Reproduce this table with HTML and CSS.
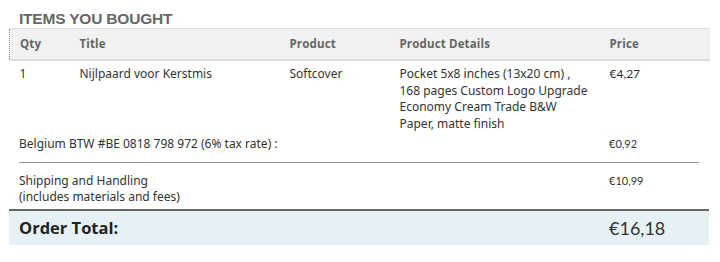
FILE: index.html
```html
<!DOCTYPE html>
<html>
<head>
<meta charset="utf-8">
<link rel="stylesheet" href="styles.css">
</head>
<body>
<div class="items">
  <h2 class="items-title">ITEMS YOU BOUGHT</h2>
  <table class="items-table">
    <colgroup>
      <col class="c-qty"><col class="c-title"><col class="c-product"><col class="c-details"><col class="c-price">
    </colgroup>
    <thead>
      <tr><th>Qty</th><th>Title</th><th>Product</th><th>Product Details</th><th>Price</th></tr>
    </thead>
    <tbody>
      <tr>
        <td>1</td>
        <td>Nijlpaard voor Kerstmis</td>
        <td>Softcover</td>
        <td>Pocket 5x8 inches (13x20 cm) ,<br>168 pages Custom Logo Upgrade<br>Economy Cream Trade B&amp;W<br>Paper, matte finish</td>
        <td class="price">€4,27</td>
      </tr>
    </tbody>
  </table>
  <div class="summary-row tax">
    <div class="label">Belgium BTW #BE 0818 798 972 (6% tax rate) :</div>
    <div class="amount">€0,92</div>
  </div>
  <div class="summary-row shipping">
    <div class="label">Shipping and Handling<br>(includes materials and fees)</div>
    <div class="amount">€10,99</div>
  </div>
  <div class="total-row">
    <div class="total-label">Order Total:</div>
    <div class="total-amount">€16,18</div>
  </div>
</div>
</body>
</html>
```
FILE: styles.css
```css
html, body {
  margin: 0;
  padding: 0;
  background: #fff;
}
body {
  font-family: "Noto Sans", "Open Sans", sans-serif;
  color: #333;
}
.items {
  width: 700px;
  margin-left: 9px;
}
.items-title {
  margin: 0;
  padding: 10px 0 0 10px;
  font-family: "Liberation Sans", Arial, sans-serif;
  font-weight: 700;
  font-size: 15.5px;
  line-height: 18px;
  letter-spacing: -0.2px;
  color: #666;
}
.items-table {
  width: 700px;
  border-collapse: collapse;
  table-layout: fixed;
}
.c-qty { width: 60px; }
.c-title { width: 210px; }
.c-product { width: 110px; }
.c-details { width: 210px; }
.c-price { width: 110px; }
.items-table th {
  background: #f1f1f1;
  border-top: 1px solid #ddd;
  border-bottom: 2px solid #ddd;
  border-left: 0;
  text-align: left;
  font-family: "Open Sans", sans-serif;
  font-weight: 700;
  font-size: 11.5px;
  letter-spacing: 0.15px;
  color: #666;
  padding: 7px 0 7px 10px;
  line-height: 16px;
}
.items-table th:first-child {
  border-left: 1px dotted #888;
}
.items-table td {
  vertical-align: top;
  font-size: 12px;
  line-height: 16.5px;
  padding: 5px 0 0 10px;
  color: #333;
}
.items-table td.price {
  font-family: Lato, sans-serif;
  font-size: 12px;
}
.summary-row {
  display: grid;
  grid-template-columns: 590px 1fr;
  margin: 0 10px;
  font-size: 12px;
  line-height: 16.5px;
}
.summary-row .amount {
  font-family: Lato, sans-serif;
  font-size: 11px;
}
.tax {
  padding: 4px 0 9px 0;
  border-bottom: 1px solid #999;
}
.shipping {
  padding: 10px 0 3px 0;
}
.total-row {
  display: grid;
  grid-template-columns: 600px 1fr;
  background: #e6f1f6;
  border-top: 2px solid #666;
  height: 34px;
  align-items: center;
}
.total-label {
  padding-left: 10px;
  font-family: "Open Sans", sans-serif;
  font-weight: 700;
  font-size: 16.5px;
  color: #222;
}
.total-amount {
  font-family: Lato, sans-serif;
  font-size: 18px;
  color: #333;
}
```
